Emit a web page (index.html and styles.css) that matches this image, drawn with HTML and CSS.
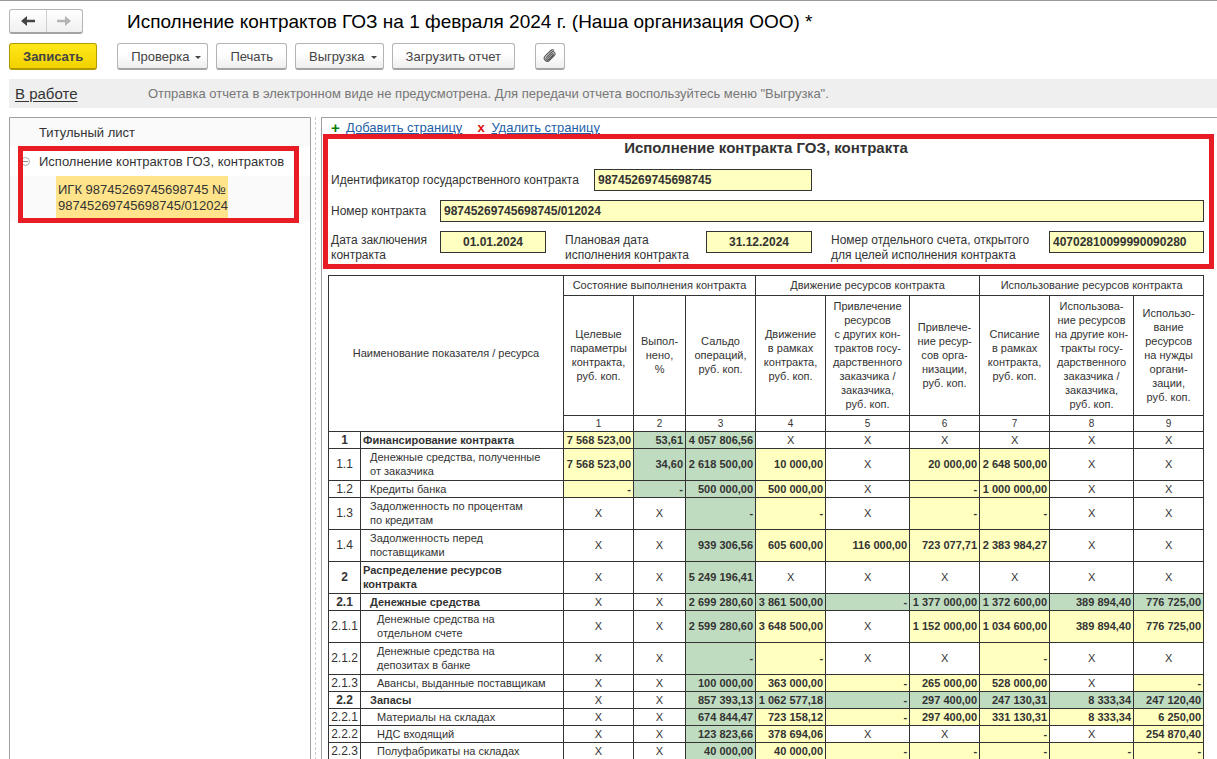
FILE: index.html
```html
<!DOCTYPE html>
<html lang="ru">
<head>
<meta charset="utf-8">
<title>Исполнение контрактов ГОЗ</title>
<link rel="stylesheet" href="styles.css">
</head>
<body>
<header class="titlebar">
  <div class="history">
    <button type="button" class="history-btn" aria-label="Назад"><svg width="14" height="12" viewBox="0 0 14 12"><path d="M0 6 6 1V4.800H14V7.200H6V11Z" fill="#444"/></svg></button>
    <button type="button" class="history-btn" aria-label="Вперед"><svg width="14" height="12" viewBox="0 0 14 12"><path d="M14 6 8 1V4.800H0V7.200H8V11Z" fill="#b4b4b4"/></svg></button>
  </div>
  <h1 class="title">Исполнение контрактов ГОЗ на 1 февраля 2024 г. (Наша организация ООО) *</h1>
</header>
<div class="toolbar">
  <button type="button" class="btn btn-primary">Записать</button>
  <button type="button" class="btn btn-menu">Проверка<span class="caret"></span></button>
  <button type="button" class="btn">Печать</button>
  <button type="button" class="btn btn-menu">Выгрузка<span class="caret"></span></button>
  <button type="button" class="btn">Загрузить отчет</button>
  <button type="button" class="btn btn-icon" aria-label="Файлы"><svg width="14" height="14" viewBox="0 0 14 14"><path d="M4.500 9.300 9 4.900c.8-.8 1.900.3 1.100 1.100L5.600 10.500c-1.500 1.500-3.700-.5-2.200-2.100L8.300 3.500c2.100-2.100 5.200.7 3.100 2.900L6.500 11.300C3.700 14.100-.6 10 2.100 7.100L7.200 2c1-1 2.300-1.400 3.600-.9" fill="none" stroke="#555" stroke-width="1.100" stroke-linecap="round"/></svg></button>
</div>
<div class="status">
  <a href="#" class="status-link">В работе</a>
  <span class="status-text">Отправка отчета в электронном виде не предусмотрена. Для передачи отчета воспользуйтесь меню "Выгрузка".</span>
</div>
<main class="workspace">
  <nav class="tree">
    <div class="tree-item tree-alt">Титульный лист</div>
    <div class="tree-item tree-group"><svg class="toggle" width="9" height="9" viewBox="0 0 9 9"><circle cx="4.500" cy="4.500" r="4" fill="#fff" stroke="#aaa"/><path d="M2 4.500h5" stroke="#888"/></svg>Исполнение контрактов ГОЗ, контрактов</div>
    <div class="tree-leaf tree-alt"><span class="tree-selected">ИГК 98745269745698745 №<br>98745269745698745/012024</span></div>
    <div class="mark mark-tree"></div>
  </nav>
  <div class="splitter"></div>
  <section class="sheet">
    <div class="page-links">
      <span class="plus">+</span><a href="#">Добавить страницу</a>
      <span class="cross">x</span><a href="#">Удалить страницу</a>
    </div>
    <form class="form">
      <h2 class="form-title">Исполнение контракта ГОЗ, контракта</h2>
      <div class="row">
        <label class="label-wide" for="igk">Идентификатор государственного контракта</label>
        <input class="field field-igk" id="igk" value="98745269745698745">
      </div>
      <div class="row">
        <label class="label" for="num">Номер контракта</label>
        <input class="field field-grow" id="num" value="98745269745698745/012024">
      </div>
      <div class="row">
        <label class="label" for="d1">Дата заключения<br>контракта</label>
        <input class="field field-date" id="d1" value="01.01.2024">
        <label class="label-plan" for="d2">Плановая дата<br>исполнения контракта</label>
        <input class="field field-date" id="d2" value="31.12.2024">
        <label class="label-account" for="acc">Номер отдельного счета, открытого<br>для целей исполнения контракта</label>
        <input class="field field-grow" id="acc" value="40702810099990090280">
      </div>
      <div class="mark mark-form"></div>
    </form>
    <table class="grid">
      <colgroup><col class="c32"><col class="c203"><col class="c70"><col class="c52"><col class="c70"><col class="c70"><col class="c84"><col class="c70"><col class="c70"><col class="c84"><col class="c70"></colgroup>
      <thead>
        <tr class="h-group"><th colspan="2" rowspan="3">Наименование показателя / ресурса</th><th colspan="3">Состояние выполнения контракта</th><th colspan="3">Движение ресурсов контракта</th><th colspan="3">Использование ресурсов контракта</th></tr>
        <tr class="h-cols"><th>Целевые<br>параметры<br>контракта,<br>руб. коп.</th><th>Выпол-<br>нено,<br>%</th><th>Сальдо<br>операций,<br>руб. коп.</th><th>Движение<br>в рамках<br>контракта,<br>руб. коп.</th><th>Привлечение<br>ресурсов<br>с других кон-<br>трактов госу-<br>дарственного<br>заказчика /<br>заказчика,<br>руб. коп.</th><th>Привлече-<br>ние ресур-<br>сов орга-<br>низации,<br>руб. коп.</th><th>Списание<br>в рамках<br>контракта,<br>руб. коп.</th><th>Использова-<br>ние ресурсов<br>на другие кон-<br>тракты госу-<br>дарственного<br>заказчика /<br>заказчика,<br>руб. коп.</th><th>Использо-<br>вание<br>ресурсов<br>на нужды<br>органи-<br>зации,<br>руб. коп.</th></tr>
        <tr class="h-num"><th>1</th><th>2</th><th>3</th><th>4</th><th>5</th><th>6</th><th>7</th><th>8</th><th>9</th></tr>
      </thead>
      <tbody>
        <tr class="strong"><td class="code">1</td><td class="name">Финансирование контракта</td><td class="y">7 568 523,00</td><td class="g">53,61</td><td class="g">4 057 806,56</td><td>X</td><td>X</td><td>X</td><td>X</td><td>X</td><td>X</td></tr>
        <tr class="tall"><td class="code">1.1</td><td class="name in1">Денежные средства, полученные<br>от заказчика</td><td class="y">7 568 523,00</td><td class="g">34,60</td><td class="g">2 618 500,00</td><td class="y">10 000,00</td><td>X</td><td class="y">20 000,00</td><td class="y">2 648 500,00</td><td>X</td><td>X</td></tr>
        <tr><td class="code">1.2</td><td class="name in1">Кредиты банка</td><td class="y">-</td><td class="g">-</td><td class="g">500 000,00</td><td class="y">500 000,00</td><td>X</td><td class="y">-</td><td class="y">1 000 000,00</td><td>X</td><td>X</td></tr>
        <tr class="tall"><td class="code">1.3</td><td class="name in1">Задолженность по процентам<br>по кредитам</td><td>X</td><td>X</td><td class="g">-</td><td class="y">-</td><td>X</td><td class="y">-</td><td class="y">-</td><td>X</td><td>X</td></tr>
        <tr class="tall"><td class="code">1.4</td><td class="name in1">Задолженность перед<br>поставщиками</td><td>X</td><td>X</td><td class="g">939 306,56</td><td class="y">605 600,00</td><td class="y">116 000,00</td><td class="y">723 077,71</td><td class="y">2 383 984,27</td><td>X</td><td>X</td></tr>
        <tr class="tall strong"><td class="code">2</td><td class="name">Распределение ресурсов<br>контракта</td><td>X</td><td>X</td><td class="g">5 249 196,41</td><td>X</td><td>X</td><td>X</td><td>X</td><td>X</td><td>X</td></tr>
        <tr class="strong"><td class="code">2.1</td><td class="name in1">Денежные средства</td><td>X</td><td>X</td><td class="g">2 699 280,60</td><td class="g">3 861 500,00</td><td class="g">-</td><td class="g">1 377 000,00</td><td class="g">1 372 600,00</td><td class="g">389 894,40</td><td class="g">776 725,00</td></tr>
        <tr class="tall"><td class="code">2.1.1</td><td class="name in2">Денежные средства на<br>отдельном счете</td><td>X</td><td>X</td><td class="g">2 599 280,60</td><td class="y">3 648 500,00</td><td>X</td><td class="y">1 152 000,00</td><td class="y">1 034 600,00</td><td class="y">389 894,40</td><td class="y">776 725,00</td></tr>
        <tr class="tall"><td class="code">2.1.2</td><td class="name in2">Денежные средства на<br>депозитах в банке</td><td>X</td><td>X</td><td class="g">-</td><td class="y">-</td><td>X</td><td>X</td><td class="y">-</td><td>X</td><td>X</td></tr>
        <tr><td class="code">2.1.3</td><td class="name in2">Авансы, выданные поставщикам</td><td>X</td><td>X</td><td class="g">100 000,00</td><td class="y">363 000,00</td><td class="y">-</td><td class="y">265 000,00</td><td class="y">528 000,00</td><td>X</td><td class="y">-</td></tr>
        <tr class="strong"><td class="code">2.2</td><td class="name in1">Запасы</td><td>X</td><td>X</td><td class="g">857 393,13</td><td class="g">1 062 577,18</td><td class="g">-</td><td class="g">297 400,00</td><td class="g">247 130,31</td><td class="g">8 333,34</td><td class="g">247 120,40</td></tr>
        <tr><td class="code">2.2.1</td><td class="name in2">Материалы на складах</td><td>X</td><td>X</td><td class="g">674 844,47</td><td class="y">723 158,12</td><td class="y">-</td><td class="y">297 400,00</td><td class="y">331 130,31</td><td class="y">8 333,34</td><td class="y">6 250,00</td></tr>
        <tr><td class="code">2.2.2</td><td class="name in2">НДС входящий</td><td>X</td><td>X</td><td class="g">123 823,66</td><td class="y">378 694,06</td><td>X</td><td>X</td><td class="y">-</td><td>X</td><td class="y">254 870,40</td></tr>
        <tr><td class="code">2.2.3</td><td class="name in2">Полуфабрикаты на складах</td><td>X</td><td>X</td><td class="g">40 000,00</td><td class="y">40 000,00</td><td class="y">-</td><td class="y">-</td><td class="y">-</td><td class="y">-</td><td class="y">-</td></tr>
      </tbody>
    </table>
  </section>
</main>
</body>
</html>
```
FILE: styles.css
```css
* { box-sizing: border-box; }

body {
  margin: 0;
  height: 100vh;
  overflow: hidden;
  display: flex;
  flex-direction: column;
  border-top: 1px solid #999;
  background: #fff;
  color: #333;
  font: 13px/15px "Liberation Sans", Arial, sans-serif;
}

.titlebar {
  display: flex;
  align-items: center;
  gap: 44px;
  padding: 8px 9px 0;
}
.history {
  display: flex;
  width: 74px;
  height: 25px;
  border: 1px solid #b4b4b4;
  border-bottom: 2px solid #a4a4a4;
  border-radius: 3px;
  background: linear-gradient(#fff, #f0f0f0);
}
.history-btn {
  flex: 1;
  display: flex;
  align-items: center;
  justify-content: center;
  padding: 0;
  border: 0;
  background: none;
}
.history-btn + .history-btn { border-left: 1px solid #d0d0d0; }
.title {
  margin: 0;
  font-size: 19px;
  line-height: 24px;
  font-weight: 400;
  color: #000;
  white-space: nowrap;
}

.toolbar {
  display: flex;
  gap: 8px;
  padding: 9px 9px 0;
}
.btn {
  display: flex;
  align-items: center;
  justify-content: center;
  height: 27px;
  padding: 0 13px;
  border: 1px solid #b4b4b4;
  border-bottom: 2px solid #a4a4a4;
  border-radius: 3px;
  background: linear-gradient(#fff 40%, #eee);
  color: #444;
  font: 13px/15px "Liberation Sans", Arial, sans-serif;
  white-space: nowrap;
}
.btn-primary {
  margin-right: 12px;
  border-color: #b09a00;
  background: linear-gradient(#ffe81a, #f2d200);
  font-weight: 700;
}
.btn-menu { padding-right: 6px; }
.caret {
  margin: 2px 0 0 6px;
  border: 3px solid transparent;
  border-top-color: #444;
  border-bottom: 0;
}
.btn-icon {
  width: 30px;
  margin-left: 12px;
  padding: 0;
}

.status {
  display: flex;
  align-items: center;
  height: 29px;
  margin: 9px 0 0 9px;
  padding-left: 6px;
  background: #efefef;
}
.status-link {
  width: 133px;
  color: #333;
  font-size: 15px;
  text-underline-offset: 2px;
}
.status-text { color: #777; white-space: nowrap; }

.workspace {
  flex: 1;
  min-height: 0;
  display: flex;
  margin-top: 9px;
  padding-left: 9px;
}
.tree {
  position: relative;
  flex: 0 0 302px;
  border: 1px solid #a0a0a0;
  border-bottom: 0;
}
.tree-item {
  display: flex;
  align-items: center;
  height: 29px;
  padding-left: 29px;
}
.tree-group { padding-left: 11px; gap: 9px; }
.tree-alt { background: #fafafa; }
.tree-leaf {
  display: flex;
  height: 45px;
  padding-left: 46px;
}
.tree-selected {
  padding: 6px 0 0 2px;
  background: #ffe48c;
  line-height: 16px;
}
.splitter {
  flex: 0 0 10px;
  background: repeating-linear-gradient(#ccc 0 3px, transparent 3px 5px) 4px 0 / 1px 100% no-repeat;
}
.sheet {
  flex: 1;
  min-width: 0;
  overflow: hidden;
  border: 1px solid #a0a0a0;
  border-width: 1px 0 0 1px;
  padding: 0 13px 0 6px;
}

.page-links {
  display: flex;
  height: 18px;
  padding: 2px 0 0 3px;
}
.page-links a { color: #1f5fa8; text-underline-offset: 1px; }
.plus, .cross { font-weight: 700; }
.plus { width: 15px; color: #008000; font-size: 15px; }
.cross { width: 14px; margin-left: 15px; color: #e01010; }

.form {
  position: relative;
  display: flex;
  flex-direction: column;
  gap: 9px;
  height: 139px;
}
.form-title {
  margin: 2px 0 0;
  padding-bottom: 2px;
  text-align: center;
  font-size: 15px;
  line-height: 20px;
}
.row {
  display: flex;
  height: 22px;
  padding-left: 3px;
  line-height: 15px;
  font-size: 12px;
  white-space: nowrap;
}
.row label { align-self: center; }
.row label:has(br) { align-self: flex-start; padding-top: 2px; }
.label-wide { width: 263px; }
.label { width: 109px; }
.label-plan { width: 141px; margin-left: 19px; }
.label-account { width: 218px; margin-left: 19px; }
.field {
  height: 22px;
  min-width: 0;
  padding: 0 3px;
  border: 1px solid #333;
  border-radius: 0;
  background: #ffffbf;
  color: #333;
  font: 700 12px/15px "Liberation Sans", Arial, sans-serif;
}
.field-igk { width: 218px; }
.field-date { width: 106px; text-align: center; }
.field-grow { flex: 1; }

.mark {
  position: absolute;
  border: 5px solid #e81c24;
  pointer-events: none;
}
.mark-tree { top: 28px; left: 8px; width: 281px; height: 77px; }
.mark-form { top: -2px; left: -5px; right: -10px; height: 135px; }

.grid {
  width: 100%;
  table-layout: fixed;
  border-collapse: collapse;
  font-size: 11px;
  line-height: 14px;
}
.c32 { width: 32px; }
.c203 { width: 203px; }
.c52 { width: 52px; }
.c70 { width: 70px; }
.c84 { width: 84px; }
.grid th, .grid td {
  padding: 0 1px;
  border: 1px solid #333;
  text-align: center;
  vertical-align: middle;
  font-weight: 400;
  white-space: nowrap;
}
.grid tr { height: 17px; }
.grid .tall { height: 32px; }
.grid .tall td, .grid .h-group th { padding-bottom: 2px; }
.grid .h-group { height: 20px; }
.grid .h-cols { height: 120px; }
.grid .h-cols th { padding-bottom: 1px; }
.grid .h-num { height: 16px; font-size: 10px; }
.grid .code { font-size: 12px; }
.grid .name { text-align: left; padding-left: 2px; }
.grid .in1 { padding-left: 9px; }
.grid .in2 { padding-left: 16px; }
.grid .strong .code, .grid .strong .name { font-weight: 700; }
.grid .y, .grid .g { padding-right: 2px; text-align: right; font-weight: 700; }
.grid .y { background: #ffffbf; }
.grid .g { background: #c0dcc0; }
```
